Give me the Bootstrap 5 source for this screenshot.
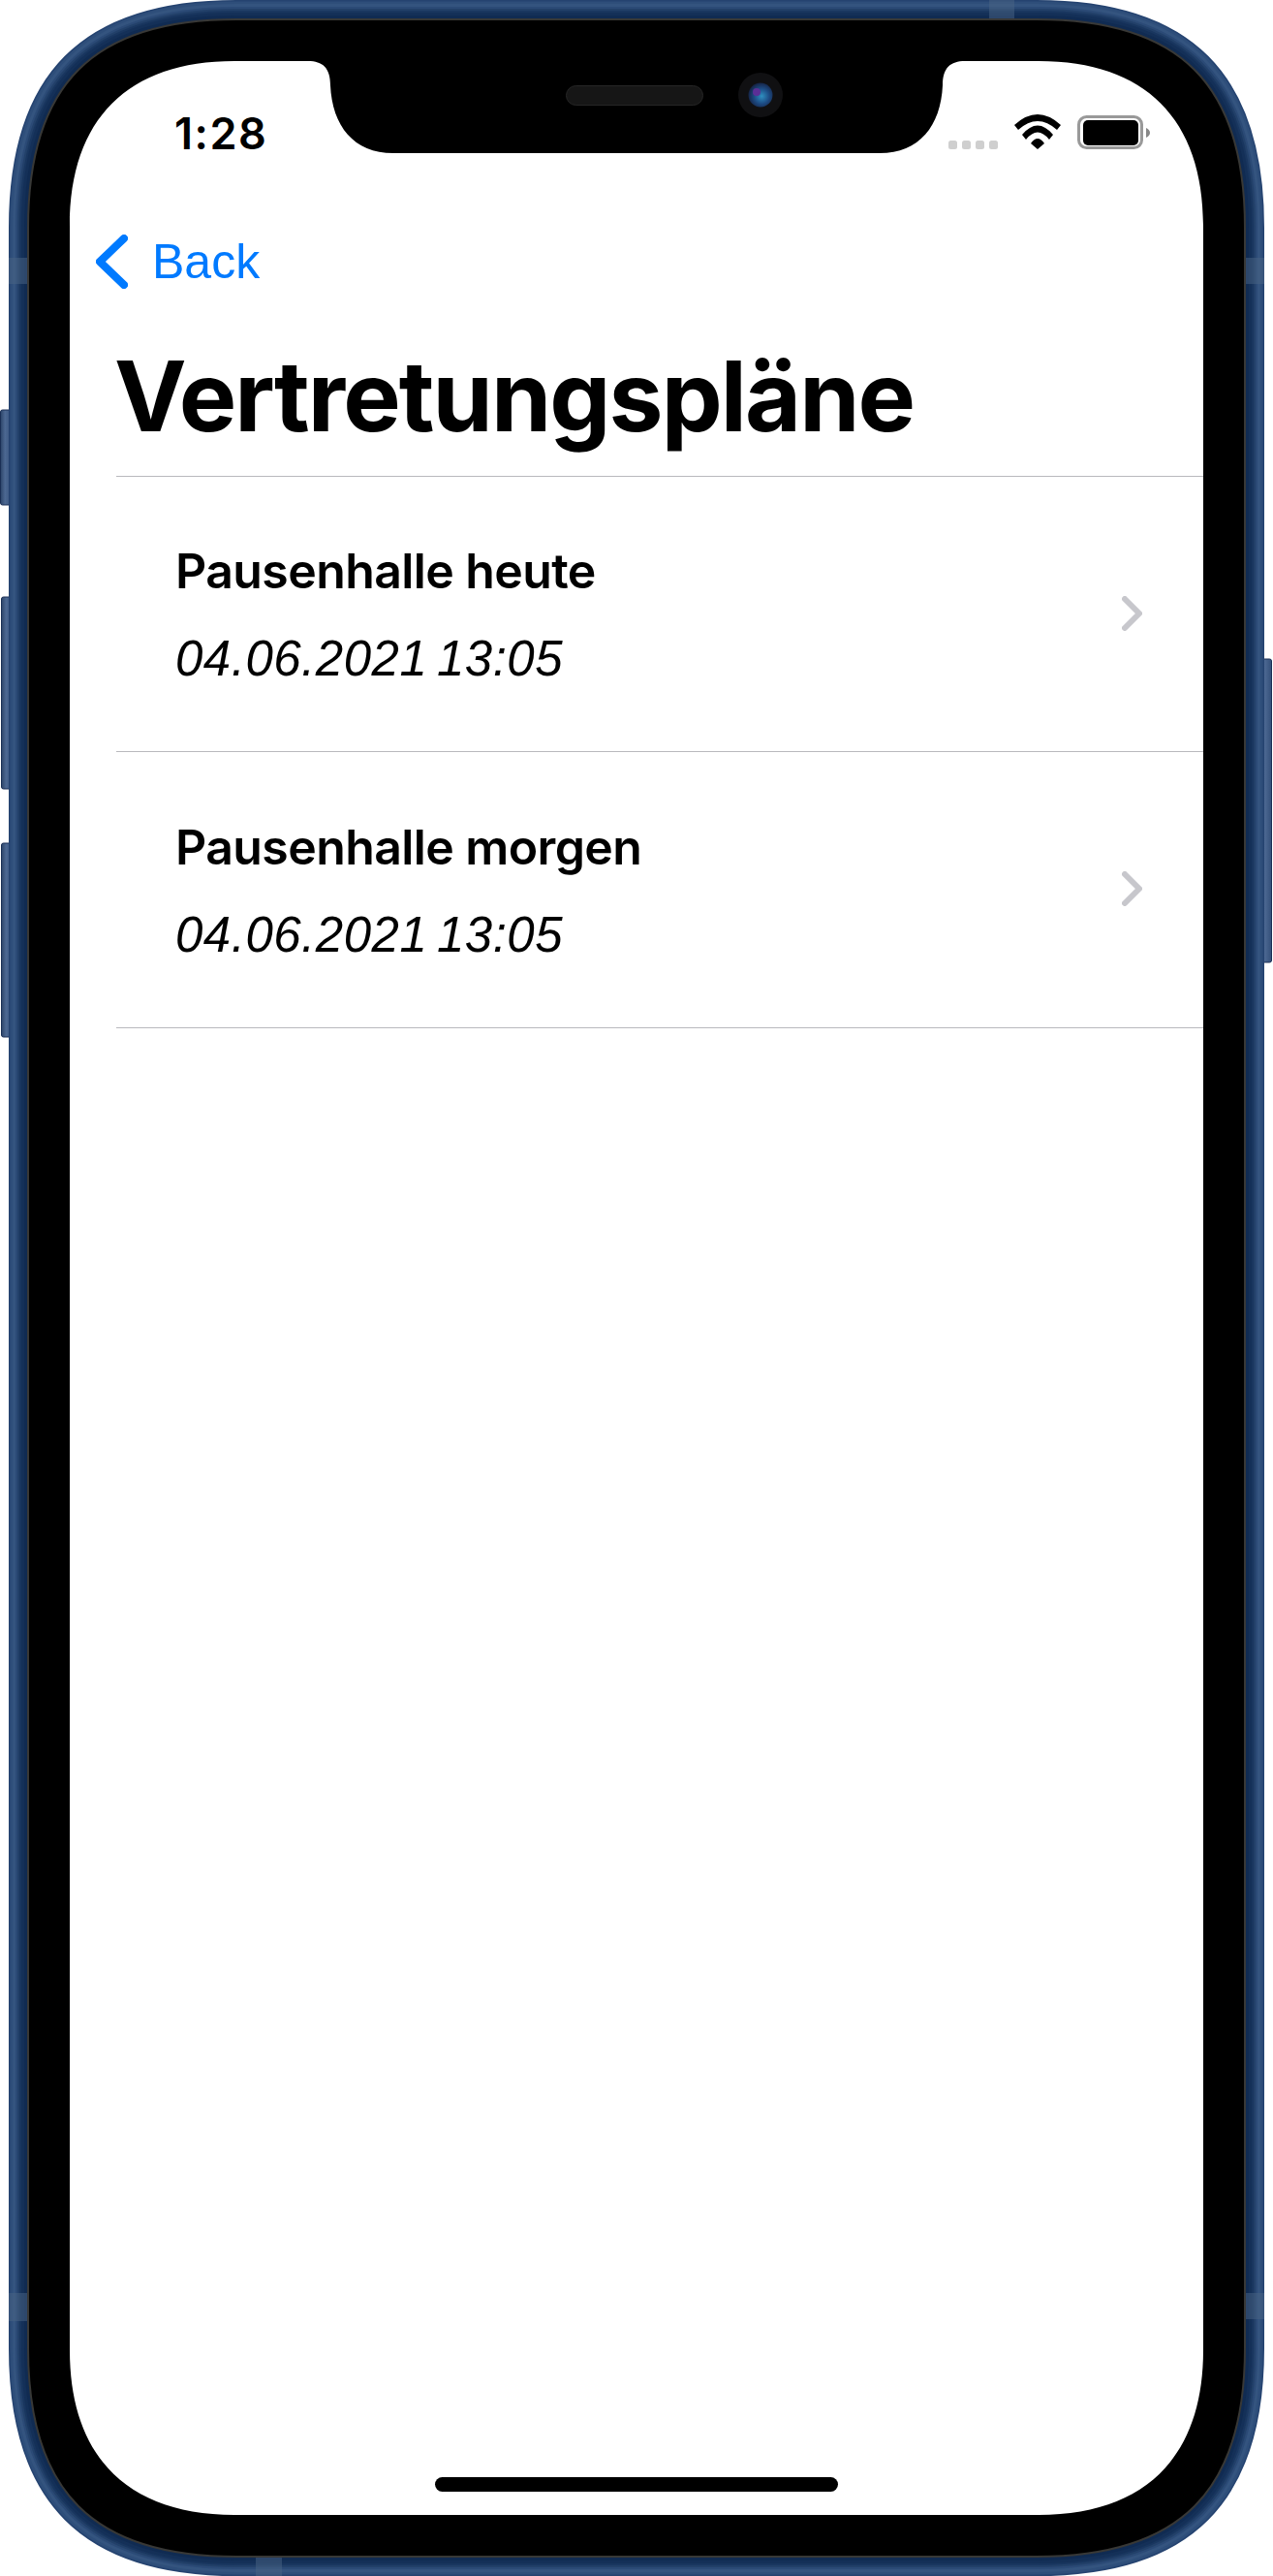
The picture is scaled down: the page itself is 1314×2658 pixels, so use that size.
<!DOCTYPE html>
<html lang="de">
<head>
    <meta charset="UTF-8">
    <title>Vertretungspläne</title>
    <link href="https://cdn.jsdelivr.net/npm/bootstrap@5.3.3/dist/css/bootstrap.min.css" rel="stylesheet">
    <style>
        body {
            background-color: #fff;
            color: #000;
        }

        .phone {
            position: relative;
            width: 1314px;
            height: 2658px;
        }

        .phone-frame {
            position: absolute;
            top: 0;
            left: 0;
        }

        .phone-screen {
            position: absolute;
            top: 63px;
            left: 72px;
            width: 1170px;
            height: 2532px;
        }

        .status-bar {
            padding: 50px 55px 0 108px;
        }

        .status-time {
            font: 600 45px/50px Inter, sans-serif;
            letter-spacing: 1.5px;
        }

        .status-icons {
            margin-top: 5px;
        }

        .nav-back {
            margin-top: 77px;
            padding-left: 27px;
            gap: 25px;
            color: #007aff;
            font: 400 50px/60px "Liberation Sans", sans-serif;
        }

        .page-title {
            margin: 59px 0 32px 46px;
            font: 700 100px/100px Inter, sans-serif;
            letter-spacing: -1.9px;
            color: #000;
        }

        .plan-list {
            margin-left: 48px;
            border-top: 1px solid #b9b9bd;
            border-bottom: 1px solid #b9b9bd;
        }

        .plan-list .list-group-item {
            height: 284px;
            padding: 2px 63px 0 61px;
            border: 0;
            border-bottom: 1px solid #b9b9bd;
            color: #000;
        }

        .plan-list .list-group-item:last-child {
            border-bottom: 0;
        }

        .plan-title {
            font: 600 50px/60px Inter, sans-serif;
            letter-spacing: -.6px;
            margin-bottom: 31px;
        }

        .plan-date {
            font: italic 400 51px/60px "Liberation Sans", sans-serif;
            letter-spacing: .5px;
            word-spacing: -5px;
        }

        .plan-chevron {
            margin-bottom: 4px;
        }

        .home-bar {
            width: 416px;
            height: 15px;
            margin-bottom: 24px;
            background-color: #000;
        }
    </style>
</head>
<body class="m-0">

<div class="phone">
    <svg class="phone-frame" width="1314" height="2658" viewBox="0 0 1314 2658" aria-hidden="true">
        <defs>
            <path id="rim" d="M29 235 C29 87 96 20 244 20 H1070 C1218 20 1285 87 1285 235 V2423 C1285 2571 1218 2638 1070 2638 H244 C96 2638 29 2571 29 2423 Z"/>
            <linearGradient id="btn" x1="0" x2="1" y1="0" y2="0">
                <stop offset="0" stop-color="#2c4468"/>
                <stop offset="0.4" stop-color="#4c6892"/>
                <stop offset="1" stop-color="#34507a"/>
            </linearGradient>
            <radialGradient id="lens" cx="0.55" cy="0.55" r="0.6">
                <stop offset="0" stop-color="#2f8fc0"/>
                <stop offset="0.5" stop-color="#1d4d86"/>
                <stop offset="1" stop-color="#141d3c"/>
            </radialGradient>
        </defs>

        <!-- side buttons -->
        <rect x="0.5" y="423" width="12" height="98" rx="2" fill="url(#btn)" stroke="#1a2f55"/>
        <rect x="1.5" y="616" width="12" height="198" rx="2" fill="url(#btn)" stroke="#1a2f55"/>
        <rect x="1.5" y="870" width="12" height="200" rx="2" fill="url(#btn)" stroke="#1a2f55"/>
        <rect x="1300.5" y="680" width="12" height="313" rx="2" fill="url(#btn)" stroke="#1a2f55"/>

        <!-- metal rim, painted from the outside in -->
        <g fill="none">
            <use href="#rim" stroke="#254370" stroke-width="40"/>
            <use href="#rim" stroke="#2e4e7a" stroke-width="37"/>
            <use href="#rim" stroke="#34547f" stroke-width="32"/>
            <use href="#rim" stroke="#2b4a76" stroke-width="26"/>
            <use href="#rim" stroke="#224069" stroke-width="22"/>
            <use href="#rim" stroke="#19365f" stroke-width="18"/>
            <use href="#rim" stroke="#143058" stroke-width="14"/>
            <use href="#rim" stroke="#102b52" stroke-width="8"/>
        </g>
        <use href="#rim" fill="#000" stroke="#383836" stroke-width="2"/>

        <!-- antenna bands -->
        <g fill="#4a6484" fill-opacity="0.5">
            <rect x="9" y="266" width="19" height="27"/>
            <rect x="1286" y="266" width="19" height="27"/>
            <rect x="9" y="2366" width="19" height="29"/>
            <rect x="1286" y="2366" width="19" height="27"/>
            <rect x="1021" y="0" width="26" height="19"/>
            <rect x="264" y="2639" width="27" height="19"/>
        </g>

        <!-- screen with notch -->
        <path fill="#fff" d="M72 233 C72 123 132 63 242 63 H318 C333 63 341 70 341 88 C343 130 365 158 406 158 H908 C949 158 971 130 973 88 C973 70 981 63 996 63 H1072 C1182 63 1242 123 1242 233 V2425 C1242 2535 1182 2595 1072 2595 H242 C132 2595 72 2535 72 2425 Z"/>

        <!-- speaker and camera -->
        <rect x="584.5" y="88.5" width="141" height="20" rx="10" fill="#161616" stroke="#262626"/>
        <circle cx="785" cy="98" r="23" fill="#101012"/>
        <circle cx="785" cy="98" r="12.5" fill="url(#lens)"/>
        <circle cx="781" cy="95" r="4" fill="#5b2f96"/>
    </svg>

    <div class="phone-screen d-flex flex-column">
        <div class="status-bar d-flex justify-content-between align-items-start">
            <span class="status-time">1:28</span>
            <svg class="status-icons" width="208" height="36" viewBox="979 118 208 36" aria-hidden="true">
                <g fill="#cfcfcf">
                    <rect x="979" y="145" width="9" height="9" rx="2.5"/>
                    <rect x="993" y="145" width="9" height="9" rx="2.5"/>
                    <rect x="1007" y="145" width="9" height="9" rx="2.5"/>
                    <rect x="1021" y="145" width="9" height="9" rx="2.5"/>
                </g>
                <path d="M1047 129 Q1071 107 1095 129 L1091 134 Q1071 116 1051 134 Z"/>
                <path d="M1055 139 Q1071 120 1087 139 L1083 144 Q1071 129 1059 144 Z"/>
                <path d="M1064 148 Q1071 138 1078 148 L1071 154 Z"/>
                <rect x="1113.5" y="120.5" width="65" height="32" rx="8" fill="none" stroke="#999" stroke-width="3"/>
                <rect x="1118" y="124" width="57" height="26" rx="5"/>
                <path d="M1183 132 Q1187 134 1187 137 Q1187 140 1183 142 Z" fill="#888"/>
            </svg>
        </div>

        <a class="nav-back d-flex align-items-center text-decoration-none" href="#">
            <svg width="33" height="56" viewBox="0 0 33 56" aria-hidden="true">
                <path d="M29 4 L4 28 L29 52" fill="none" stroke="#007aff" stroke-width="8" stroke-linecap="round" stroke-linejoin="round"/>
            </svg>
            <span>Back</span>
        </a>

        <h1 class="page-title">Vertretungspläne</h1>

        <div class="plan-list list-group list-group-flush">
            <a class="list-group-item d-flex justify-content-between align-items-center" href="#">
                <div>
                    <div class="plan-title">Pausenhalle heute</div>
                    <div class="plan-date">04.06.2021 13:05</div>
                </div>
                <svg class="plan-chevron" width="21" height="36" viewBox="0 0 21 36" aria-hidden="true">
                    <path d="M3 3 L18 18 L3 33" fill="none" stroke="#c7c7cc" stroke-width="6" stroke-linecap="round" stroke-linejoin="round"/>
                </svg>
            </a>
            <a class="list-group-item d-flex justify-content-between align-items-center" href="#">
                <div>
                    <div class="plan-title">Pausenhalle morgen</div>
                    <div class="plan-date">04.06.2021 13:05</div>
                </div>
                <svg class="plan-chevron" width="21" height="36" viewBox="0 0 21 36" aria-hidden="true">
                    <path d="M3 3 L18 18 L3 33" fill="none" stroke="#c7c7cc" stroke-width="6" stroke-linecap="round" stroke-linejoin="round"/>
                </svg>
            </a>
        </div>

        <div class="home-bar rounded-pill mx-auto mt-auto"></div>
    </div>
</div>

<script src="https://cdn.jsdelivr.net/npm/bootstrap@5.3.3/dist/js/bootstrap.bundle.min.js"></script>
</body>
</html>
